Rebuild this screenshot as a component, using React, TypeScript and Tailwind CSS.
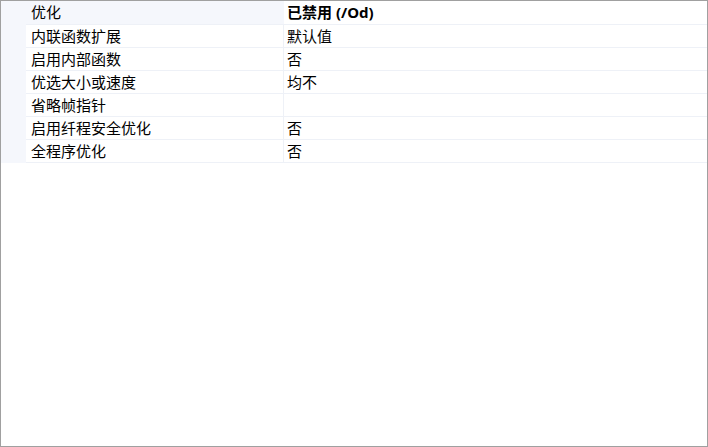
const rows: { name: string; value: string }[] = [
  { name: '内联函数扩展', value: '默认值' },
  { name: '启用内部函数', value: '否' },
  { name: '优选大小或速度', value: '均不' },
  { name: '省略帧指针', value: '' },
  { name: '启用纤程安全优化', value: '否' },
  { name: '全程序优化', value: '否' },
];

const font = { fontFamily: '"Noto Sans", "Noto Sans CJK SC", sans-serif' };

export default function App() {
  return (
    <div
      className="h-[447px] w-[708px] border border-[#a0a0a0] bg-white text-[15px] text-black"
      style={font}
    >
      <div className="flex">
        <div className="w-[25px] shrink-0 bg-[#f5f7fc]" />
        <div className="flex-1">
          <div className="flex h-[24px] border-b border-[#eef1f7]">
            <div className="flex w-[258px] items-center bg-[#f5f7fc] pl-[5px] leading-none">优化</div>
            <div className="flex flex-1 items-center pl-[3px] font-bold leading-none">已禁用 (/Od)</div>
          </div>
          {rows.map((r) => (
            <div key={r.name} className="flex h-[23px] border-b border-[#eef1f7]">
              <div className="flex w-[258px] items-center border-r border-[#eef1f7] pl-[5px] leading-none">
                {r.name}
              </div>
              <div className="flex flex-1 items-center pl-[3px] leading-none">{r.value}</div>
            </div>
          ))}
        </div>
      </div>
    </div>
  );
}
